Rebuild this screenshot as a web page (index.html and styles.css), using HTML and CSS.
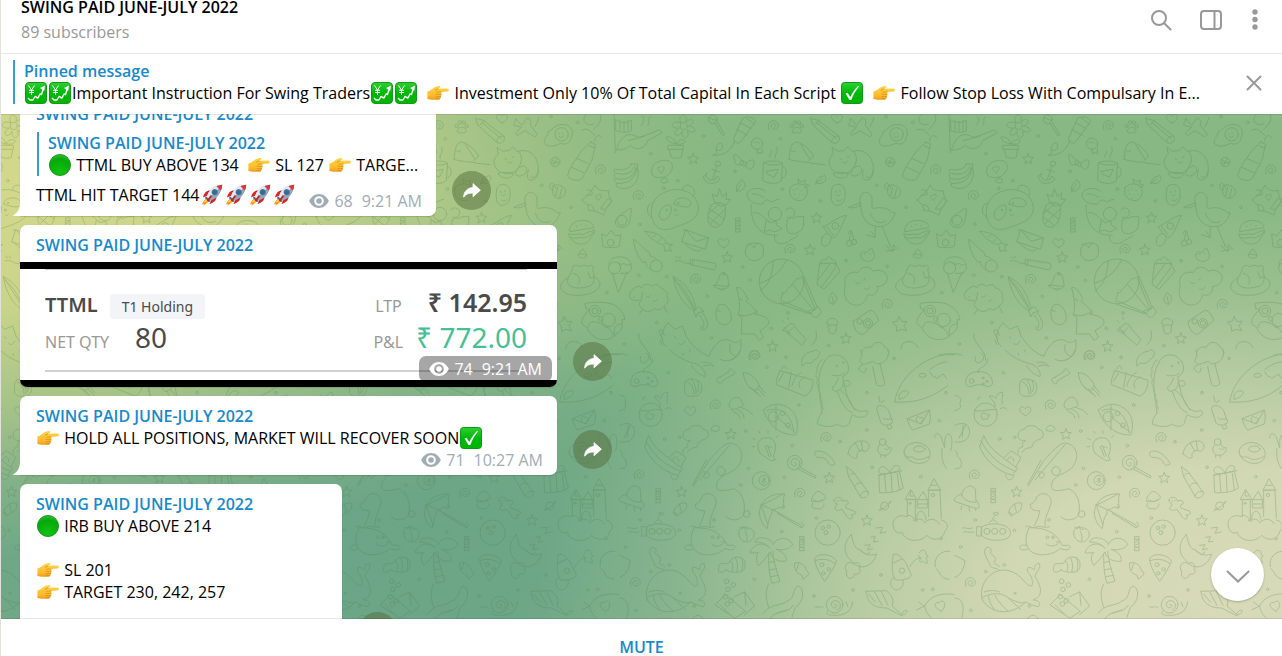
FILE: index.html
```html
<!DOCTYPE html>
<html lang="en">
<head>
    <meta charset="UTF-8">
    <meta name="viewport" content="width=device-width, initial-scale=1.0">
    <title>SWING PAID JUNE-JULY 2022</title>
    <link rel="stylesheet" href="styles.css">
</head>
<body>
    <!-- Shared icons and emoji -->
    <svg class="sprite" aria-hidden="true">
        <defs>
            <linearGradient id="green-fill" x1="0" y1="0" x2="0" y2="1">
                <stop offset="0" stop-color="#2fd02f"/>
                <stop offset=".5" stop-color="#00b80a"/>
                <stop offset="1" stop-color="#00b400"/>
            </linearGradient>
            <radialGradient id="ball-fill" cx=".5" cy=".85" r=".9">
                <stop offset="0" stop-color="#10c410"/>
                <stop offset=".7" stop-color="#06a80a"/>
                <stop offset="1" stop-color="#3cc43c"/>
            </radialGradient>
            <linearGradient id="hand-fill" x1="0" y1="0" x2="0" y2="1">
                <stop offset="0" stop-color="#ffd54a"/>
                <stop offset=".7" stop-color="#fdbb2c"/>
                <stop offset="1" stop-color="#ee9a1c"/>
            </linearGradient>
        </defs>
        <symbol id="e-chart" viewBox="0 0 22 22">
            <rect x=".5" y=".5" width="21" height="21" rx="3.5" fill="url(#green-fill)" stroke="#129a1a"/>
            <path d="M3.500 3.500l3 4.500 3-4.500M6.500 8v5M4 8.300h5M4 10.500h5" fill="none" stroke="#fff" stroke-width="1"/>
            <path d="M3 16l2 2h3l2-3.500 3 1.500 2-4 1.500.5L18.500 6" fill="none" stroke="#fff" stroke-width="1.400" stroke-linejoin="round"/>
            <path d="M15 6l5-2.500-.8 5.500z" fill="#fff"/>
        </symbol>
        <symbol id="e-check" viewBox="0 0 22 22">
            <rect x=".5" y=".5" width="21" height="21" rx="3" fill="url(#green-fill)" stroke="#0a9a18"/>
            <path d="M4.500 11.500l2-.8 2.800 4.300C11.500 10.500 14 7 17 4l1 .4C14.500 8.500 12 13 10.300 18H8.500z" fill="#fff"/>
        </symbol>
        <symbol id="e-ball" viewBox="0 0 22 22">
            <circle cx="11" cy="11" r="10.600" fill="url(#ball-fill)" stroke="#0f8f14" stroke-width=".8"/>
        </symbol>
        <symbol id="e-hand" viewBox="0 0 22 22">
            <path d="M.4 9.500C3 8.800 4.800 7.600 6.500 6c1.700-1.300 4.200-2.200 6-2.100 1.200.2 1.200 1.500.1 2l-1.800.9 9.300-.2c2.200 0 2.300 2.700.3 2.900l-6.500.5c.9.600.9 1.600.2 2.200.6.700.5 1.700-.3 2.200.4.800.1 1.700-.8 2-.2 1-1 1.400-2.300 1.400H6c-2.300 0-3.600-.7-5.600-.9z" fill="url(#hand-fill)"/>
            <path d="M10.800 6.800L8 8.300M9.500 10.200l4.500-.2M9 12.400h5M9 14.600h4.600M9 16.600h3.800" fill="none" stroke="#d98a1c" stroke-width=".7" stroke-linecap="round"/>
        </symbol>
        <symbol id="e-rocket" viewBox="0 0 22 22">
            <path d="M5 14l-4.500 6.500L3 20l-.5 1.800L8.500 17z" fill="#ff9a1f"/>
            <path d="M5.500 14.500L3 18.500l5-2z" fill="#ffe04a"/>
            <path d="M9 6.500C5.500 6.500 3 9 2 13.500l4.500-2zM15.500 12.500c0 4-2.500 6-7 7.500l2-4.700z" fill="#d9222a"/>
            <path d="M5.800 13C7 6.500 12.500 1.500 21.300.7 20.500 9.500 15.500 15 9 16.500z" fill="#93a9ba"/>
            <path d="M5.800 13C7 6.500 12.500 1.500 21.300.7L7.500 14.800z" fill="#dfe8ef"/>
            <path d="M15.500 2.200c1.700-.8 3.600-1.300 5.800-1.500-.2 2.200-.7 4.200-1.500 5.900z" fill="#e0323a"/>
            <circle cx="13.700" cy="8.200" r="2.700" fill="#2b6ca8" stroke="#5d7285" stroke-width=".9"/>
            <path d="M4.800 12.300l4.800 4.800-1.600.8-4-4z" fill="#5d5a68"/>
            <path d="M10.500 11.500L6.500 17" stroke="#c01f28" stroke-width="1.800"/>
        </symbol>
        <symbol id="i-eye" viewBox="0 0 20 14">
            <path fill="currentColor" fill-rule="evenodd" d="M10 0c4.500 0 8 2.800 9.800 7-1.800 4.200-5.300 7-9.800 7S2 11.200.2 7C2 2.800 5.500 0 10 0zm0 2.200a4.800 4.800 0 1 0 0 9.600 4.800 4.800 0 0 0 0-9.600zm0 2a2.800 2.800 0 1 1 0 5.600 2.800 2.800 0 0 1 0-5.600z"/>
        </symbol>
        <symbol id="i-share" viewBox="0 0 18 15">
            <path fill="currentColor" stroke="currentColor" stroke-linejoin="round" stroke-width=".8" d="M10 .6l7.400 6.600L10 13.800V10C6 9.900 3 11 .6 14.200.8 8.600 4.200 5 10 4.400z"/>
        </symbol>
        <symbol id="i-tail" viewBox="0 0 8 14">
            <path fill="#fff" d="M8 0v14H.8C.2 14 0 13.500.4 13.200 5.500 10 7 6 7 0z"/>
        </symbol>

        <!-- Wallpaper parts -->
        <g id="swirl"><path d="M-13 12C-22-8-4-20 8-13 21-4 14 13 0 10c-11-4-8-16 1-16 7 1 8 9 1 10"/></g>
        <g id="star"><path d="M0-15l4 11 12 1-9 8 3 11-10-6-10 7 2-12-9-8 12-1z"/></g>
        <g id="heart"><path d="M2 15C-10 9-18 1-15-7-10-16-2-11 1-5 5-13 13-14 17-6 18 4 10 11 2 15z"/></g>
        <g id="wrapped"><path d="M-7-20H7l-2 8H-5zM-7 22H7L5 12H-5zM-6-12H6V12H-6zM-6-3L6-9M-6 6L6 0"/></g>
        <g id="dot"><circle r="4"/></g>

        <g id="doodles">
            <g transform="translate(0 -4) scale(.3333)">
                <use href="#swirl" x="122" y="180"/><use href="#swirl" x="235" y="257"/><use href="#swirl" x="407" y="508"/>
                <use href="#swirl" x="640" y="47"/><use href="#swirl" x="690" y="418"/><use href="#swirl" x="982" y="583"/>
                <use href="#swirl" x="582" y="737"/>
                <use href="#star" x="400" y="145"/><use href="#star" x="770" y="322"/><use href="#star" x="750" y="418"/>
                <use href="#star" x="502" y="441"/><use href="#star" x="638" y="708"/><use href="#star" x="858" y="684"/>
                <use href="#heart" x="490" y="398"/><use href="#heart" x="830" y="24"/><use href="#wrapped" x="534" y="344"/>
                <use href="#dot" x="53" y="37"/><use href="#dot" x="272" y="131"/><use href="#dot" x="353" y="212"/>
                <use href="#dot" x="430" y="78"/><use href="#dot" x="525" y="184"/><use href="#dot" x="661" y="86"/>
                <use href="#dot" x="781" y="273"/><use href="#dot" x="667" y="237"/><use href="#dot" x="33" y="292"/>
                <use href="#dot" x="239" y="343"/><use href="#dot" x="236" y="496"/><use href="#dot" x="320" y="500"/>
                <use href="#dot" x="140" y="548"/><use href="#dot" x="290" y="638"/><use href="#dot" x="454" y="684"/>
                <use href="#dot" x="548" y="471"/><use href="#dot" x="571" y="511"/><use href="#dot" x="442" y="559"/>
                <use href="#dot" x="193" y="702"/><use href="#dot" x="806" y="707"/><use href="#dot" x="634" y="655"/>
                <use href="#dot" x="858" y="452"/><use href="#dot" x="950" y="226"/><use href="#dot" x="981" y="469"/>
                <use href="#dot" x="978" y="20"/><use href="#dot" x="684" y="609"/>
                <path d="M1018 620l8 15 15-1-9 14 8 14-17-4-13 6-1-17-12-10 15-4z"/>
                <!-- bottle -->
                <path d="M92 96l15 7-5 20c-2 30-20 50-35 82-10 12-45 4-44-10 8-30 25-45 42-72 12-14 18-16 27-27zM50 145l35 16M36 172l35 16M88 108l17 6"/>
                <path d="M78 14c-18 20 4 36 22 28M120 14c10 20-10 34-18 44M66 60c20-10 28 10 38 16M125 84c-6-16-24-4-20 10"/>
                <!-- guitar player -->
                <path d="M166 128l-4-114M168 30c12 10 34 10 46 0v32c-12 6-34 6-46 0zM180 32v28M192 34v28M204 32v28M170 120c4-22 20-50 45-46 25 8 15 10 42 2l40-16 10 8-44 24c-10 30-40 28-52 14-12 12-28 14-41 14zM205 92l50-14"/>
                <path d="M246 18c10 8 4 20-2 28M272 20c-10 6-2 18-8 26"/>
                <!-- flower pot -->
                <circle cx="371" cy="48" r="11"/>
                <path d="M362 38c-12-30 24-30 16-2 18-18 34 0 8 12 30 4 22 30-4 12 10 28-18 32-16 4-12 24-36 8-8-10-30 4-28-26 4-16zM348 102c-4-20-24-24-30-20 2 14 16 16 30 20 8-14 22-16 28-10-4 14-18 10-28 10zM324 106h46v12h-46zM328 118l6 24c10 4 22 4 30 0l4-24"/>
                <!-- lollipop and firecracker -->
                <circle cx="458" cy="28" r="13"/>
                <path d="M446 22l24 10M465 40l23 37 6-3-22-37M549 24c10-8 36-2 38 10l-44 60c-6 10-24 4-22-8zM540 38l34 18M530 58l32 18M558 24l26 18M524 92c-10 30-28 44-66 44 4-2 10-4 12-8-6-28 18-40 18-18-2 12-14 14-16 10"/>
                <circle cx="591" cy="101" r="17"/>
                <path d="M582 98l5-2M592 97l5 2M592 117v14l8-4 7 4v-15"/>
                <!-- paw, pencil, plane, egg -->
                <path d="M697 65c-2-12 22-22 26-2 0 8-8 6-13 4-6 4-12 2-13-2z"/>
                <circle cx="695" cy="48" r="5"/><circle cx="705" cy="37" r="5"/><circle cx="717" cy="38" r="5"/><circle cx="725" cy="49" r="5"/>
                <path d="M753 25l22 6 62 48c6 16-10 26-22 18l-56-52zM766 44l13-14M771 38l58 48M815 97c0-12 10-22 22-18"/>
                <path d="M872 26l18 20 16-22c10 0 14 10 10 22l20 26c0 8-8 10-14 4l-22-14-22 14c-8 0-6-8-2-12l14-12-24-6c0-6 4-8 6-20zM942 22c-2 12-8 18-12 28"/>
                <path d="M970 66c16-10 24-26 50-22 20 2 26 20 20 36-6 24-18 24-34 20-18 10-48 14-48-6 0-10 8-12 12-28z"/>
                <circle cx="1010" cy="73" r="20"/>
                <path d="M1002 70v2M1012 68v2M1002 79c6 6 12 4 14-2"/>
                <!-- bananas, anchor, bow, mug -->
                <path d="M212 162h22l-2 10c14 44-26 80-64 56l2-8c-8-8-8-12-4-16-6-8-4-10 0-14-6-8-4-12 2-12 22 4 40 0 46-16M170 190c30 8 48-4 54-20M168 206c36 8 56-10 60-32M170 220c40 4 60-22 60-46"/>
                <path d="M278 196c-16-28 20-50 46-44 22 8 14 38-8 48-16 4-30 4-38-4zM312 205c14-4 16 14 0 14-14-2-12-12 0-14zM305 188c-14-6-18-20-4-16 8-10 18 4 4 16z"/><use href="#dot" x="311" y="235"/>
                <circle cx="474" cy="161" r="8"/>
                <path d="M470 170l-12 36M456 178l22 8M440 190l-10 10c4 14 10 20 24 20 14 0 22-6 26-14l-10-8-4 10c-16 6-24 0-28-8z"/>
                <path d="M545 150c-10-10-20-20-24-16 0 10 4 18 6 28 8 6 18 2 24-2zM560 160c8-12 20-12 24-6-6 10-2 20-10 24-8 0-12-6-18-10zM545 150l15 10-6 10-14-8z"/>
                <path d="M611 158c14-8 48-6 57 2l-4 52c-12 12-42 10-55 0zM611 158c10 8 44 10 57 2M668 170c16 0 14 34-3 34M619 184l36-6-12 24-12-6-6-2zM630 142c-4-10 8-10 4-20M646 146c-6-12 12-18 4-34"/>
                <!-- fin, cat, bee, ghost -->
                <path d="M687 148c4-30 4-50 24-52 20 6 36 20 50 42l-14 14M722 104l28 44M687 148c30 10 56 6 70 12l38 4M695 122c4 4 8 4 12 0"/>
                <path d="M816 178c-16-20-8-34 4-46l-4-20 18 12c8-2 12-2 18-2l12-12 12 14c12 0 20 28 6 46-16 28-50 26-66 8zM880 124c36-12 62 20 60 56 0 18-8 32-24 30-12-4-10-14-6-30M870 190c6 12 20 10 30 0 8-6 6-18-2-22-14 0-22 10-26 20M820 190c6-4 36-4 44 0 4 18-40 20-44 0zM840 146l5 3M862 142l5-2M848 156l8 4 6-6M940 180c-2 20-14 28-22 20"/>
                <circle cx="991" cy="156" r="14"/><path d="M982 150l18 12M996 146l-10 20M979 160l22-4"/>
                <path d="M985 228c6-8 30-2 36 12 4 20-16 28-26 24-10-6-16-18-10-36zM992 234c-8-24-22-14-16 0 2 6 8 8 10 4M998 232l-6 26M1010 236l-6 26"/>
                <path d="M815 240c0-24 38-22 40 2 4 30-8 46-26 44-18-4-16-28-14-46zM827 244v4M840 242v4M830 254c4 6 8 4 10 0M830 270c6 4 12 6 16-2"/>
                <path d="M768 218c6-20 16-16 26-22 6 8 4 20-10 24zM766 222c10-8 14-12 20-16M530 243c-4-20 6-20 14-34 14 8 16 22 0 32zM530 245c6-14 10-16 14-24"/>
                <!-- pillow, avocado, burger, crown -->
                <path d="M105 226c8 14 18 18 40 16 0 14 4 24 12 30-8 10-20 20-26 44-8-4-24-16-46-14 4-16-10-24-20-32 14-10 24-16 40-44zM116 270c-14-8-10-16-2-14 6-8 18 0 2 14zM122 295l22-30c8 2 12 8 4 20-6 10-16 18-26 10zM80 240c10-4 20 6 16 14l-18 2M84 284c10-2 18 6 18 20"/>
                <path d="M166 336c2-20 24-24 44-42 10 0 0 20 0 38-6 20-22 24-36 18-6-4-8-8-8-14z"/><circle cx="186" cy="331" r="15"/>
                <path d="M29 364c-4-24 26-36 46-32 18 2 28 12 26 20zM27 372c12 6 30-4 42 2 14-8 24-10 34-14v10c-8 6-10 14-18 24-16 14-40 8-48-4-8-8-10-12-10-18zM28 380c10 8 24 4 34 2 14 6 26-4 40-16M50 348v2M64 342v2M78 346v2"/>
                <path d="M126 372l14 6 14-18 12 18 16-4-4 34c-10 6-38 6-48 2z"/><circle cx="152" cy="398" r="10"/>
                <path d="M56 432l12-16 12 16v8c-6 6-18 6-24 0zM56 434c10-6 18 4 24 0"/>
                <!-- panda -->
                <path d="M275 322c-6-40 10-70 60-82 40-6 82 14 80 60-4 30-36 40-70 52-36 14-58 8-70-30zM276 280c-16-2-20 36-2 40M368 240c-2-24 36-16 36 6 0 8-2 12-6 16M298 320c-6-20 20-40 34-34 8 8-4 50-26 44zM342 282c-4-20 44-28 52-2-2 16-28 12-52 2zM345 314c2 4 8 4 10 0"/><circle cx="320" cy="300" r="2"/><circle cx="354" cy="279" r="2"/><circle cx="346" cy="300" r="3"/>
                <!-- pineapple -->
                <path d="M454 286c10-14 36-8 42 0 2 30-4 64-30 66-30-4-26-40-12-66zM450 298l44 30M444 320l34 26M496 296l-44 44M478 282l-34 30M464 276l-8-24 16 8 6-24 10 24 12-12-2 20 14 0-12 16-18 4z"/>
                <!-- monkey cat -->
                <path d="M616 244c-14-16-60-10-54 14 4 20 30 26 46 24 8-20 24-10 26-6 10-2 14-8 22-8M612 262c-10-2-12-12-36-10M574 284c-4 30 8 80 54 90l24 2M580 308c20-4 36 20 50 30M678 300c6-12 26-6 26 8-2 14-12 16-22 14M682 330c10-4 10-10 16-4 12-8 20-6 34-6l-2 30c-6 20-40 30-48 12-4-10-2-20 0-32zM644 376c-6 30 30 30 44 16 14-10 22-8 26-16M620 330l12 8 16-4 2 12 16 10-22 10-16-6-14 4z"/><circle cx="645" cy="312" r="20"/>
                <!-- strawberry -->
                <path d="M690 234c10-18 46-16 52 4 2 18-8 34-24 34-20-2-34-16-28-38zM716 220l-2-14 10 10 12-6-2 12 14 4-14 8M700 240v1M712 236v1M724 242v1M704 252v1M718 254v1M730 254v1M712 264v1"/>
                <!-- pizza, cherries, bird -->
                <path d="M790 350c20-6 40-30 70-34-12 20-18 50-38 68-10-4-22-16-32-34zM786 384c-8 30 14 30 24 14 4-12 6-20-4-26-8-2-16 2-20 12zM800 350l20 26"/><circle cx="826" cy="348" r="10"/>
                <circle cx="868" cy="400" r="9"/><circle cx="882" cy="396" r="8"/><path d="M868 390l6-28 8 28M864 372c2-10 8-12 10-8"/>
                <path d="M900 278c-6-36 30-40 36-14 2 12-4 26 4 32 20-6 40-4 58 12l8 0c-10 26-24 44-54 42-28-4-40-20-46-40zM902 278l-36 14c14 4 30 0 38-10M932 310c4 20 24 36 44 24M946 352v30M968 352l24 60M920 374l24 8M934 364l10 16M978 406l20 20 2-22 14 14M978 424l28-6"/>
                <!-- meteor, carrot, letter, dynamite -->
                <path d="M220 388c8-2 30 30 48 40l2 10c12 2 14 6 18 8M220 388c4 24 10 50 30 70l6-4c4 20 12 22 18 26"/><circle cx="289" cy="468" r="18"/>
                <path d="M254 364c34 2 56 14 64 34-10 16-40-6-64-34zM318 400l20 4-10 6 6 14-14-4-4 6-4-18M280 380l8-6M296 394l8-8"/>
                <path d="M378 360l68 24-10 34-70-22zM378 360l30 34 38-10M372 398c20 20 36 28 48 24l8-8M370 360h8"/>
                <path d="M392 448l74 12c4 8 0 18-4 20l-70-16zM400 450l-4 16M390 460c-16 4-22-8-34-8M348 440l6 4M360 438v6M346 452h6"/>
                <!-- ice cream, hamster, sheep -->
                <circle cx="164" cy="474" r="18"/><path d="M148 466c-10-30 62-38 66 0 2 14-4 22-14 22l-25 60-18-60M182 490h22M178 458c6 16 12-6 18 6 6 6 8-6 16 2"/>
                <path d="M40 470c8-8 12-4 18 0 8-4 20-6 26 0 12-8 20 0 14 10 8 20 6 40-8 48-40 14-80 4-64-28 8-8 8-20 14-30zM22 504c-30 20-24 36 0 48 46 12 96-4 98-30-2-14-10-18-20-22M40 490c16 4 24 16 16 32M84 486l6 18 8-2"/>
                <path d="M238 570c-16 4-30 0-30-16 4-12 12-18 20-22l8-4 10 6c4-14 22-14 28-4 10-10 26-6 28 4 16 4 22 16 20 26 6 16-4 24-10 28l10 20M310 590c-14 16-24 6-28 6-12 14-28 8-34 2l-10 14M248 596c-16-6-10-20-4-26l4-22M222 560v2M260 560c6 4 10 0 12-4M280 572c6 4 10 0 12-4"/>
                <!-- umbrella, bell, egg, tree -->
                <path d="M340 500c30 16 50 34 68 92l-6 10c-24-10-54-48-62-102zM340 500l64 100M344 510c30 20 46 60 60 88M402 602l14-12 16 14-18 4-6 12zM418 614l14 24c-2 20-4 20-10 10M428 608l14 26c4 20-8 34-20 22"/>
                <path d="M462 526c18-4 10-36 28-38 18 4 12 24 18 38-4 16-36 14-46 2zM460 528c20-8 34 8 46-2M478 536c2 6 12 6 14 0"/><circle cx="492" cy="492" r="4"/><path d="M478 584c16-8 34 14 36 36 0 20-14 28-30 22-20-8-22-44-6-58zM470 600l10 4"/>
                <path d="M530 534c12-10 26 18 34 34l-6 6c14 10 30 26 34 34l-8 4c20 4 50 12 42 30-10 12-20 16-26 20l10 20-12 10-14-20-40 0 2-50-12-8c10-20 2-60-4-80zM538 614c20 8 38 0 54-12M540 566l8 6"/>
                <!-- balloon, cake, cloud, camera -->
                <circle cx="665" cy="514" r="67"/>
                <path d="M640 452c-2 44-14 74-40 90M680 450c-20 40-50 60-82 70M732 500l40 92-22 20-88-30M664 576c-4-14 4-14 4-28 14 2 8-12 26-20 8-20 12-12 16-22 8 4 10-6 22-6M700 526l62 76M728 508l38 90M670 574l84 36M756 600l18-10 10 14c-4 14-12 18-22 18l-16-18z"/>
                <path d="M780 460l48 0 12 24-48 54-20-14zM784 464c-8-10 8-20 14-14 4-14 18-10 18 0 12-2 16 10 8 18M776 508l34-46M784 532l44-60"/>
                <path d="M860 570c-10-16-8-30-4-44-10-24 14-46 38-38 8-20 36-22 46-4 20-10 44 4 42 22-4 20-20 22-30 24 4 12-6 24-16 26-10-2-14-2-14 0-4 30-42 42-62 14zM886 516c4 6 10 6 14 2M912 510l4-6M914 536c6 6 14 2 16-6"/>
                <path d="M808 576c-4-16 4-18 8-28 16 8 20 24 4 34zM820 584c0-10-2-20-4-24M880 634l48-32c10-4 24 12 28 30l-46 40c-16 6-32-22-30-38z"/><circle cx="924" cy="640" r="14"/><circle cx="924" cy="640" r="8"/><circle cx="899" cy="634" r="8"/>
                <path d="M903 434c4-16 12-4 20-8 6-4 6-14 12-12l8 20c4 14-14 22-22 20-12-2-22-10-18-20zM914 432v2M930 430v2"/>
                <path d="M800 640c0-20 32-20 34 0 0 8-34 8-34 0zM804 646l4 22c6 6 16 4 20-2l2-20M668 660l24-20 10 4 10 16 26 28-12 18-46-40zM672 652l18 18M700 652l-20 20M768 662c4 20 0 34-12 42M668 632l4 4M684 622v6"/>
                <path d="M556 424c0-26 30-30 50-20 10 20 6 48-26 48-16-2-24-14-24-28zM560 404c8-6 16 2 22 10 2-10 6-12 12-14"/>
                <!-- pug in goggles, fox, clouds -->
                <circle cx="105" cy="603" r="17"/><circle cx="146" cy="630" r="20"/><circle cx="105" cy="603" r="9"/>
                <path d="M76 580c30-6 80-4 90 8 18 10 30 30 28 42l-8-2c4 20 0 36-18 44-16 24-70 26-88-20-20-10-18-20-4-40l12-14-10-2zM84 652c4-20 14-18 32-14 20 8 40 20 44 40M118 620c8-2 14 6 8 14-10 0-12-8-8-14M184 642c-20 0-26 20-20 36M134 650c4 6 14 4 16-2"/>
                <path d="M320 710c-20-14-20-44 4-72l20 20 24-10 10 30c20 30 40 50 66 60M308 690l-12-28 8-4 10 18M300 690l6 14M344 680l4 6M356 700c8 8 14 2 18-6M446 740c20-50 50-60 72-44 12 4 20 0 24-8 4 30 0 50-30 62M510 704c-4 20 4 32 20 36M236 672c-4 30 40 50 36 78"/>
                <path d="M18 716c-2-26 40-30 50-4M904 730c4-20 20-20 30-18 8-20 34-20 40 0 12 2 16 14 10 24M130 736c20-6 60-8 72 0"/>
            </g>
            <g transform="translate(60 236) scale(.3333)">
                <use href="#swirl" x="405" y="17"/><use href="#swirl" x="286" y="165"/><use href="#swirl" x="58" y="375"/>
                <use href="#swirl" x="618" y="263"/><use href="#swirl" x="539" y="430"/><use href="#swirl" x="46" y="698"/>
                <use href="#star" x="333" y="251"/><use href="#star" x="185" y="424"/><use href="#star" x="628" y="382"/><use href="#star" x="741" y="510"/>
                <use href="#heart" x="210" y="182"/><use href="#wrapped" x="115" y="436"/><use href="#wrapped" x="546" y="580"/>
                <use href="#dot" x="145" y="68"/><use href="#dot" x="134" y="267"/><use href="#dot" x="179" y="262"/>
                <use href="#dot" x="377" y="243"/><use href="#dot" x="440" y="52"/><use href="#dot" x="498" y="22"/>
                <use href="#dot" x="536" y="165"/><use href="#dot" x="741" y="128"/><use href="#dot" x="822" y="25"/>
                <use href="#dot" x="740" y="240"/><use href="#dot" x="660" y="275"/><use href="#dot" x="517" y="287"/>
                <use href="#dot" x="385" y="355"/><use href="#dot" x="493" y="382"/><use href="#dot" x="362" y="405"/>
                <use href="#dot" x="756" y="352"/><use href="#dot" x="902" y="380"/><use href="#dot" x="958" y="212"/>
                <use href="#dot" x="978" y="128"/><use href="#dot" x="61" y="510"/><use href="#dot" x="282" y="510"/>
                <use href="#dot" x="178" y="541"/><use href="#dot" x="485" y="545"/><use href="#dot" x="589" y="504"/>
                <use href="#dot" x="963" y="566"/><use href="#dot" x="783" y="675"/><use href="#dot" x="403" y="688"/>
                <use href="#dot" x="148" y="645"/><use href="#dot" x="17" y="591"/><use href="#dot" x="92" y="665"/>
                <use href="#dot" x="582" y="738"/><use href="#dot" x="699" y="720"/><use href="#dot" x="908" y="720"/>
                <use href="#dot" x="938" y="718"/><use href="#dot" x="47" y="781"/><use href="#dot" x="223" y="768"/>
                <!-- gamepad, shell, bone, squid -->
                <path d="M40 76c10-16 52-14 64 0 14 20 10 34-6 34-14-8-36-8-50 0-18 2-22-18-8-34zM70 68c-4-20 24-10 28-40M62 20c-6 16 6 24 18 14 8-8 10-20-2-24"/><circle cx="50" cy="93" r="7"/><circle cx="84" cy="84" r="3"/><circle cx="96" cy="94" r="3"/><circle cx="84" cy="102" r="3"/>
                <path d="M194 110c-6-20 16-28 34-20 16 2 20 18 16 30 0 14-14 20-26 18-14 4-20-4-24-10zM202 96c10 4 18 10 20 36M216 90c8 10 12 20 12 40M232 92c4 14 6 20 0 34"/>
                <path d="M300 82l28-18c-4-10 8-10 10-2 10 2 6 14-4 14l-28 18c2 10-8 10-10 2-10-2-8-14 4-14zM370 68c20-4 50 28 48 44-10 14-24 8-30 0-12-14-18-30-18-44zM390 112l22 20M400 116l22 24M410 112l24 26M416 106l18 22"/>
                <!-- drawing, dinosaur, drumstick, surfboard -->
                <path d="M480 62l98 28c6 10-8 46-24 48l-84-34c-4-10 4-30 10-42zM514 66l-8 46M490 70l-14 24M516 108c4-20 14-34 28-40M540 114c-8-14 0-26 16-34M486 56c0-12 14-10 14 0"/>
                <path d="M606 188c-6-50-20-110 6-150 10-30 50-30 66-6 14 20 8 42-10 48 10 50 20 100 54 104 14 0 22-8 20 8-8 14-30 12-44 2-8 10-6 14-10 26-10 14-26 10-36 2-16 10-36 10-60 0 2-14 4-20 14-34zM606 30c-12 6-8 14-12 18-8 8 0 14-4 22-6 10 4 14 2 22-6 8 4 14 4 22-4 10 6 14 6 22-4 10 8 16 4 24-4 8 6 12 4 18M636 76c18 4 30 0 38-8M656 84l-10 20c-10 6-12 16 0 20 10-2 20-8 24-18-4-8 2-16 14-14 14 6 4 24-10 14M652 124c10 30 24 56 44 64M660 120c16 10 30 30 44 60"/><circle cx="650" cy="48" r="2"/><circle cx="670" cy="38" r="2"/>
                <path d="M722 0c4 10 6 14 0 26-8 14 10 20 20 14l18-6c8 16 40 4 44-16 4-10 0-14-2-18M728 46c-14 2-14 14-4 18 6 8 16 2 14-10M758 50l12 54c6 8 26 4 24-6l-14-56M545 36c0-16 14-30 34-32 10-8 14-4 20 4-4 10-4 18-14 20-10 14-20 14-28 10l-10 10z"/>
                <path d="M824 156c10-70 80-130 150-142l31 0M824 156c60 4 110-10 160-50M838 134c6-14 20-14 28-8-2 10-16 20-28 22zM930 58c20-14 30-20 50-22M930 66c8 20 16 10 20 20l20-14 10 14"/><ellipse cx="908" cy="76" rx="11" ry="6"/>
                <!-- fishbowl, jellyfish, watermelon, popsicle, letter -->
                <circle cx="92" cy="194" r="35"/><path d="M58 180c20 10 40-6 68 0M78 196l8-10 8 8 10 0-6 12-14 2zM120 172c4-20-14-20-16-34 10-2 14 4 18 8 2-10 8-18 20-20 4 14-4 18 0 36M136 176c8-6 16-2 20 2M70 150c-4-10 4-12 8-6"/>
                <path d="M328 170c-8-20 30-44 38-14 8 10 0 18-10 16-12 8-18 8-28-2zM334 178c10 16 20 4 26 26M350 176c10 12 20 6 22 28M362 170c10 12 16 0 36 24"/>
                <path d="M430 180c30-26 60-20 84 0 20 18 22 50 14 74-36 4-80-20-98-74zM440 182c40-16 76 10 82 66M468 166v74M468 200l56 46"/><circle cx="460" cy="200" r="15"/><circle cx="488" cy="190" r="7"/><circle cx="504" cy="226" r="7"/>
                <path d="M770 178c-4-16 24-16 36 4l12 34c-4 10-24 14-34 4zM790 204c4 8 14 0 26 4M800 224l6 14 10-4-6-14M776 138l4 18M794 150l-10 8M862 206l66-26c4 14 4 30 0 42l-50 18c-8-8-14-22-16-34zM862 206l42 16 24-42M892 216c-10-14 4-22 8-12 10-6 14 8 0 16"/>
                <!-- ship, fishing rod, bulb, worm -->
                <path d="M74 290l12-34c14 40 50 60 102 100l-16 20c-50-14-84-50-98-86zM78 272c20 44 60 76 104 92M148 322l20-20 30 20-16 30M158 330c4-16 20-10 18 4M190 310c-4-14 4-16 14-20-4-10 0-14 8-18-30 4-30-34-4-34 4-16 40-14 42 0 16 0 22 24 4 30-14 2-20 12-24 24-10 2-20 2-28 14M274 240c-4-14 22-20 26-4-2 10-20 10-26 4M152 374c0 20 24 20 24 2"/>
                <path d="M220 408l46-76c20-20 50-60 70-52 40 10 36 60 6 80-20 14-34 14-48 32-18 40 20 30 48 24 30 14 34 50 30 76-10 20-40 24-54 8M218 404l40-74M250 366c16-4 24 10 12 18-10 2-14-8-8-14M240 390l90-106"/><circle cx="303" cy="363" r="13"/><circle cx="380" cy="492" r="10"/>
                <path d="M420 310c-20-40 10-50 30-46 24 10 16 40 10 54l6 12-14 2c-10-6-20-14-32-22zM436 290l12 30M444 290l10 28M436 290c4-6 10-4 10 4 6-6 10-4 10 0M406 268l-8-2M420 250l-4-6M444 250v-8M470 262l6-6M404 290h-8"/>
                <circle cx="524" cy="338" r="22"/><path d="M540 352l48 26-2 6-50-26M524 338c8 0 8 10-2 10-12-2-12-22 4-22 18 2 16 26 4 30M586 306c10-8 40-2 60 36-10 6-16 4-20-2-4-12-14-18-34-18-8-4-10-8-6-16M684 312c4-30 30-44 52-38 20 10 10 30-2 30-14-8-28 4-22 18-12 8-16-4-28-10zM706 280l14 24M724 274l4 28"/>
                <circle cx="788" cy="276" r="10"/><path d="M780 284c-10 4-10 30 10 32 20 2 28-20 22-24-6 2-10 0-14-10M782 316v6M796 316v6M794 296c6 4 12 4 14-2"/>
                <path d="M852 306c0-26 40-36 60-22 20 10 22 30 14 44-10 18-64 20-74-22zM854 316c10 12 20 0 28 8 10 8 30 4 44-4M944 264c-2-16 16-20 22 4l8 26c0-20 0-44 14-42 12 10 8 36 4 50M966 296c-2 20 0 44 14 60"/><ellipse cx="898" cy="297" rx="17" ry="9"/>
                <!-- ufo, eight ball, crayon, gift -->
                <path d="M20 436c4-30 30-34 40-20 4 14 0 24 4 40-14 4-40-6-44-20zM18 432c-24 10-24 20-14 24l60 20c14-2 8-14 0-24M20 468l-2 10M42 472l2 12M62 474v8"/>
                <circle cx="424" cy="392" r="27"/><circle cx="432" cy="391" r="15"/><circle cx="432" cy="387" r="3"/><circle cx="431" cy="394" r="4"/>
                <path d="M680 350l20 16 44 60c6 10-10 22-22 16l-36-62zM686 380c6-10 10-12 20-8M704 410c4-10 14-14 24-10M720 438c4-10 14-18 26-12M778 374l60-10 12 50c-14 12-50 16-70 14zM776 376l70-14M810 370c-10-24-30-26-34-8 4 14 20 10 34 8 4-20 20-30 30-18-2 14-16 14-30 18M794 376l4 50M814 374l2 52M832 370l6 50"/>
                <!-- fish, submarine, nessie, peach, beach umbrella -->
                <path d="M162 486c0-14 14-24 28-28l10 2c2 14-4 26-20 30l-8 8-4-8zM178 462l6 22M160 488l8 10"/>
                <path d="M80 532c14-16 70-14 84 6 8 18-4 32-30 32-30 4-52-8-56-16zM66 530h14v28H66zM104 518c6-12 16-10 22 0M114 508c0-10 4-8 8-12l-8-6 14-4 2 8-8 2M22 534c10-4 14 6 30 0M26 546c10-4 14 4 30 0"/><circle cx="96" cy="544" r="9"/><circle cx="119" cy="544" r="9"/><circle cx="143" cy="544" r="9"/>
                <path d="M238 528c10-20 14-30 16-46-14 2-30-4-28-18 10-6 16-10 20-24 14-18 46-8 42 20-4 20-20 40-18 68M222 534c-14 30-10 50 0 64 20 26 74 18 92-2l20 4c14-2 14-14 4-14l-16 0c-14-30-40-50-80-52zM214 586c-20-4-24 8-16 12 8 4 14 2 22-2M212 530c10-8 20 10 34 0 10-4 20 6 38 0M274 582c10 10 30 8 40-6-4-2-8-2-10 0"/><circle cx="277" cy="562" r="4"/><circle cx="294" cy="562" r="4"/>
                <path d="M356 552c-4-20 20-24 28-18 30 4 20 40-2 42-14 0-24-10-26-24zM360 532l8 4 4-8 4 10 8 0M376 544c6 10 6 20 4 28"/>
                <path d="M418 488c2-40 40-60 76-56-4 10-4 24-2 40-12-2-20 0-24 6-10 0-14 0-12 12-10 14-12 30-14 46-14-10-24-30-24-48zM420 466c14-2 60-30 70-34M424 464l44 20M468 484l72 40c8 4 8 10 0 8M472 490l66 40c14 8 18-8 6-14M424 466l20 60M488 464l6 8-8 4"/>
                <path d="M576 454c-4-16 10-20 10-26 10-8 20 0 22 4 10 4 10 16 2 18-6 6-26 6-34 4zM578 460c-8 14 6 16 14 16 14 4 20-8 20-14M582 450c10 6 20 6 26-2M642 452c0-14 24-14 26 2 10-6 20 0 16 8-8 0-10 6-6 12l26 10c6 8-2 12-10 10l4 10c-6 6-14 2-18-6l-14-20c-10 4-20 6-22-4l8-12c-6-2-8-6-10-10zM652 452v2M660 450v2"/>
                <circle cx="794" cy="468" r="12"/><path d="M784 474c-10 10-8 10 2 4l26-20c4-10-4-2-8 2"/>
                <!-- castle -->
                <path d="M820 530c-8-24 20-40 38-30 6-8 20-4 28 14M844 548c-14 4-20-4-24-18M846 546c10 34 60 30 74 10 20 20 50 14 54-12 14-10 10-30-10-34M880 512c14-8 30-6 34 6 14-14 34-14 44 4M862 500v-52h24v60M856 448l16-30 18 30zM894 448l16-24 12 24zM892 448v26h30v-26M890 514c-2-40 24-40 28-6M926 500v-80h34l4 84M924 420l18-34 20 34zM872 424l-2 14 10 0M934 406h16M894 462h26"/><circle cx="939" cy="435" r="5"/><circle cx="870" cy="460" r="3"/>
                <!-- bowling ball, moon, rocket, pizza -->
                <circle cx="623" cy="548" r="38"/><circle cx="609" cy="534" r="5"/><circle cx="626" cy="530" r="5"/><circle cx="618" cy="548" r="6"/>
                <path d="M694 554c-26 24-24 60 0 78 20 30 62 24 76-20-20 8-40 0-50-14-14 4-20-20-26-44zM680 664c-14-20 10-34 20-22 10-10 24 0 18 14 8 14-4 18-14 16-6 22-30 14-24-8M734 586l16-2-8 16 16-4M752 562l14-2-6 16 14-2M768 534l20-2-8 18 18-4M720 600l20 14 10-8"/>
                <path d="M820 614c10-8 30 10 40 30l14 30c0 14-40 20-50 14-10-20-8-50-4-74zM818 640l30-14M824 682c-14 0-20 30 4 38 20-2 26-20 20-30M870 650c10-20 24-28 34-26M898 608c4-10 18-10 20 0-2 10 8 6 6 12-10 0-2 10-2 20-10 0-8-6-14-6-6 6-10 4-8-4 4-10-6-8-4-14"/><circle cx="846" cy="662" r="8"/>
                <path d="M584 630c-4-20 50-24 66 4-10 20-20 40-36 60-14-20-26-40-30-64zM586 632c20-8 42-4 58 8M524 640c10-10 34 6 34 20 8 4 4 8 10 12l-18 16-4-12c-20-8-24-20-22-36zM536 640l-6 20"/><circle cx="606" cy="644" r="6"/><circle cx="626" cy="658" r="5"/><circle cx="610" cy="670" r="5"/>
                <!-- palm, shell, whale, popcorn -->
                <path d="M450 594c-20-20-50-14-60 14 10 4 20-2 26 0-10 10-8 24 0 38 14-10 24-26 34-40 4 20 24 30 48 28 4-16-10-30-30-36 20 4 40 0 50-14-10-26-50-24-58 0-4-20-50-30-56-8 20 0 34 6 46 18zM446 610c0 30 0 60 10 90l24-6c-10-30-20-60-22-90M446 638l18-4M448 660l22-4M452 680l24-4"/>
                <path d="M318 660c-30 20-24-8-18-18 10-4 24 4 30-8 10-20 40-14 44 0 4 20-2 30-14 32-20 2-32 0-42-6zM330 634c10 0 10 20 6 30M346 624c8 10 8 30 4 42M364 622c6 10 6 30 2 40"/>
                <path d="M82 750c-14-50 30-100 80-88 40 10 50 50 68 46 6-10 0-20-2-30-10-10-14-20-8-26 10 0 14 4 18 8 0-10 4-20 14-20 10 14-10 24-12 40 20 30 26 60-6 70 20 0 24 14 16 20-14-2-30-10-38-14-40 40-100 40-130-6zM80 744c20-14 60-20 80 0 20 10 40 20 52 12M88 726c14-6 34-6 46 0M100 738c4 20 10 30 18 40M120 736c6 16 30 40 40 48M160 744l36 34M134 662c-4-10-30-4-30-20-10-20-24-40-8-50 14 0 14 10 10 16 4 10 20 10 14 26-10 6 10 10 14 16"/><circle cx="180" cy="730" r="3"/>
                <path d="M286 764l30-30 60 50-30 20zM344 740l30-14 30 42-30 26M300 764l30 30M374 726l4 40"/><circle cx="320" cy="694" r="7"/><circle cx="340" cy="705" r="7"/><circle cx="324" cy="718" r="7"/><circle cx="316" cy="740" r="7"/><circle cx="334" cy="752" r="7"/><circle cx="322" cy="762" r="7"/>
                <path d="M430 790c20-30 50-20 70-36 30-10 14-40 36-46 20 10 14 50-10 64l-10 30M450 806c20-30 50-10 70-40M470 790l30-10M446 702c-10 20-10 40 0 70"/>
                <circle cx="644" cy="764" r="25"/><path d="M644 764c8-4 10 8 0 10-14-2-14-22 4-22 16 2 18 24 4 28M624 782c-10 10 0 14 20 14 30 0 50-10 54-40M684 770l-6-14M584 770c10 6 20-6 26 4"/>
                <path d="M738 724l60-2c20 14 24 30 18 46l30 26M738 724c4 40 30 50 62 50l46 24M746 732l20 24M764 726l22 40M784 724l20 42M846 794c4-14 10-14 16-12-4 10-8 14-16 12M890 780l24-12M896 756l18 14c10-30 50-44 88-36M914 770c4 16 10 26 20 34M964 784c-24-10-24-30-6-26 10-14 28 4 6 26M946 650c-6-30 20-50 44-46M948 656c14 8 8 30 40 32M0 744c24 0 30 30 20 60M0 616c10 6 20 10 30 16-2 20-10 44-30 50"/>
                <path d="M0 136c16 0 22 16 14 24 8 14-4 20-14 22M0 226c30-16 50 4 42 30-6 16-20 22-42 20M0 302c10 4 4 14 10 20 14 10 10 30 4 32l-14 2M24 226l-2 34M12 264l20-40M218 806c10-14 24-14 30 0"/>
                <!-- narwhal tail -->
                <path d="M150 0c20 20 50 36 80 42 20 10 30 30 24 38-14-6-28-14-40-34M250 48c40-10 30 10 30 0-4-10-20-14-34-10M300 28c20 10 50 4 60-28M210 0v6M190 10v6"/>
            </g>
        </g>
    </svg>

    <div class="app">
        <header class="topbar">
            <div class="chat-info">
                <h1 class="chat-title">SWING PAID JUNE-JULY 2022</h1>
                <p class="chat-status">89 subscribers</p>
            </div>
            <div class="topbar-actions">
                <button class="icon-button" type="button" aria-label="Search">
                    <svg width="24" height="24" viewBox="0 0 24 24"><circle cx="10" cy="10" r="7" /><path d="M15 15l6.500 6.500"/></svg>
                </button>
                <button class="icon-button" type="button" aria-label="Toggle info panel">
                    <svg width="24" height="24" viewBox="0 0 24 24"><rect x="2" y="3" width="20" height="18" rx="3"/><path d="M15.500 3v18"/></svg>
                </button>
                <button class="icon-button icon-button-narrow" type="button" aria-label="Menu">
                    <svg class="dots" width="12" height="24" viewBox="0 0 12 24"><circle cx="6" cy="4" r="2.700"/><circle cx="6" cy="11.500" r="2.700"/><circle cx="6" cy="19" r="2.700"/></svg>
                </button>
            </div>
        </header>

        <section class="pinned">
            <div class="quote pinned-body">
                <div class="name">Pinned message</div>
                <div class="quote-text"><svg class="emoji"><use href="#e-chart"/></svg><svg class="emoji"><use href="#e-chart"/></svg>Important Instruction For Swing Traders<svg class="emoji"><use href="#e-chart"/></svg><svg class="emoji"><use href="#e-chart"/></svg>&nbsp; <svg class="emoji"><use href="#e-hand"/></svg> Investment Only 10% Of Total Capital In Each Script <svg class="emoji"><use href="#e-check"/></svg>&nbsp; <svg class="emoji"><use href="#e-hand"/></svg> Follow Stop Loss With Compulsary In E...</div>
            </div>
            <button class="icon-button" type="button" aria-label="Close">
                <svg width="24" height="24" viewBox="0 0 24 24"><path d="M5.500 6.500l13 13M18.500 6.500l-13 13"/></svg>
            </button>
        </section>

        <main class="chat">
            <svg class="wallpaper" aria-hidden="true">
                <g transform="translate(559 0)">
                    <use href="#doodles" x="-670"/>
                    <use href="#doodles" x="-335"/>
                    <use href="#doodles"/>
                    <use href="#doodles" x="335"/>
                    <use href="#doodles" x="670"/>
                    <use href="#doodles" x="1005"/>
                </g>
            </svg>

            <div class="messages">
                <div class="row">
                    <article class="bubble bubble-tailed bubble-reply">
                        <div class="name">SWING PAID JUNE-JULY 2022</div>
                        <div class="quote reply">
                            <div class="name">SWING PAID JUNE-JULY 2022</div>
                            <div class="quote-text"><svg class="emoji"><use href="#e-ball"/></svg> TTML BUY ABOVE 134&nbsp; <svg class="emoji"><use href="#e-hand"/></svg> SL 127 <svg class="emoji"><use href="#e-hand"/></svg> TARGE...</div>
                        </div>
                        <div class="last-line">
                            <p class="text">TTML HIT TARGET 144<svg class="emoji"><use href="#e-rocket"/></svg><svg class="emoji"><use href="#e-rocket"/></svg><svg class="emoji"><use href="#e-rocket"/></svg><svg class="emoji"><use href="#e-rocket"/></svg></p>
                            <div class="meta"><svg class="eye"><use href="#i-eye"/></svg><span class="views">68</span><time>9:21 AM</time></div>
                        </div>
                        <svg class="tail"><use href="#i-tail"/></svg>
                    </article>
                    <button class="share" type="button" aria-label="Share"><svg><use href="#i-share"/></svg></button>
                </div>

                <div class="row">
                    <article class="bubble bubble-wide bubble-photo">
                        <div class="name">SWING PAID JUNE-JULY 2022</div>
                        <div class="photo">
                            <div class="holding">
                                <div class="holding-line">
                                    <span class="symbol">TTML</span>
                                    <span class="tag">T1 Holding</span>
                                    <span class="label push">LTP</span>
                                    <span class="price">₹ 142.95</span>
                                </div>
                                <div class="holding-line">
                                    <span class="label">NET QTY</span>
                                    <span class="qty">80</span>
                                    <span class="label push">P&amp;L</span>
                                    <span class="profit">₹ 772.00</span>
                                </div>
                            </div>
                            <div class="meta meta-badge"><svg class="eye"><use href="#i-eye"/></svg><span class="views">74</span><time>9:21 AM</time></div>
                        </div>
                    </article>
                    <button class="share" type="button" aria-label="Share"><svg><use href="#i-share"/></svg></button>
                </div>

                <div class="row">
                    <article class="bubble bubble-tailed bubble-wide">
                        <div class="name">SWING PAID JUNE-JULY 2022</div>
                        <p class="text"><svg class="emoji"><use href="#e-hand"/></svg> HOLD ALL POSITIONS, MARKET WILL RECOVER SOON<svg class="emoji"><use href="#e-check"/></svg></p>
                        <div class="meta"><svg class="eye"><use href="#i-eye"/></svg><span class="views">71</span><time>10:27 AM</time></div>
                        <svg class="tail"><use href="#i-tail"/></svg>
                    </article>
                    <button class="share" type="button" aria-label="Share"><svg><use href="#i-share"/></svg></button>
                </div>

                <div class="row">
                    <article class="bubble bubble-call">
                        <div class="name">SWING PAID JUNE-JULY 2022</div>
                        <p class="text"><svg class="emoji"><use href="#e-ball"/></svg> IRB BUY ABOVE 214<br><br><svg class="emoji"><use href="#e-hand"/></svg> SL 201<br><svg class="emoji"><use href="#e-hand"/></svg> TARGET 230, 242, 257</p>
                    </article>
                    <button class="share" type="button" aria-label="Share"><svg><use href="#i-share"/></svg></button>
                </div>
            </div>

            <button class="scroll-down" type="button" aria-label="Scroll to bottom">
                <svg width="24" height="14" viewBox="0 0 24 14"><path d="M1.500 1.500L12 11.500l10.500-10"/></svg>
            </button>
        </main>

        <footer class="bottombar">
            <button class="mute" type="button">MUTE</button>
        </footer>
    </div>
</body>
</html>
```
FILE: styles.css
```css
:root {
    --accent: #168acd;
    --quote-bar: #3a9ad5;
    --muted: #999999;
    --meta: #a0acb6;
    --border: #e7e7e7;
}

* {
    margin: 0;
    padding: 0;
    box-sizing: border-box;
}

body {
    font-family: "Open Sans", "Noto Sans", sans-serif;
    font-size: 16px;
    line-height: 22px;
    color: #000;
    background: #fff;
}

button {
    border: none;
    background: none;
    font: inherit;
    cursor: pointer;
}

svg {
    display: block;
}

.sprite {
    position: absolute;
    width: 0;
    height: 0;
}

.app {
    display: flex;
    flex-direction: column;
    height: 100vh;
    overflow: hidden;
    border-left: 1px solid #dfe3dc;
}

/* Top bar */
.topbar {
    display: flex;
    justify-content: space-between;
    height: 54px;
    padding: 0 21px 10px 20px;
    border-bottom: 1px solid var(--border);
}

.chat-info {
    display: flex;
    flex-direction: column;
    justify-content: flex-end;
    gap: 3px;
}

.chat-title {
    font-size: 16px;
    font-weight: 600;
}

.chat-status {
    color: var(--muted);
}

.topbar-actions {
    display: flex;
    align-items: flex-start;
    gap: 26px;
    padding-top: 8px;
}

.icon-button {
    flex: none;
    width: 24px;
    height: 24px;
}

.icon-button-narrow {
    width: 12px;
}

.icon-button svg {
    fill: none;
    stroke: var(--muted);
    stroke-width: 2;
    stroke-linecap: round;
}

.icon-button .dots {
    fill: var(--muted);
    stroke: none;
}

/* Pinned message */
.pinned {
    display: flex;
    align-items: center;
    gap: 30px;
    padding: 6px 16px 10px 12px;
}

.pinned-body {
    flex: 1;
    min-width: 0;
}

.name {
    font-weight: 600;
    color: var(--accent);
    white-space: nowrap;
}

.quote {
    padding-left: 9px;
    border-left: 2px solid var(--quote-bar);
}

.quote-text {
    white-space: nowrap;
    overflow: hidden;
    text-overflow: ellipsis;
}

.emoji {
    display: inline-block;
    width: 22px;
    height: 22px;
    margin: 0 1px;
    vertical-align: top;
}

/* Chat */
.chat {
    position: relative;
    flex: 1;
    min-height: 0;
    overflow: hidden;
    background:
        radial-gradient(ellipse 54% 80% at 96% 96%, #d8dab8 0, rgba(215, 218, 183, .93) 32%, rgba(213, 216, 181, .6) 55%, rgba(213, 216, 181, .2) 79%, rgba(213, 216, 181, 0) 100%),
        radial-gradient(ellipse 56% 74% at 0 14%, #d3d88b 0, rgba(211, 216, 139, .88) 32%, rgba(211, 216, 139, .5) 60%, rgba(211, 216, 139, .17) 81%, rgba(211, 216, 139, 0) 100%),
        radial-gradient(ellipse 48% 68% at 22% 88%, #6ba587 0, rgba(107, 165, 135, .95) 38%, rgba(107, 165, 135, .55) 68%, rgba(107, 165, 135, .18) 86%, rgba(107, 165, 135, 0) 100%),
        #88b884;
}

/* Hairlines over the chat edges */
.chat::after {
    content: "";
    position: absolute;
    inset: 0;
    border: solid rgba(0, 0, 0, .1);
    border-width: 1px 0;
    pointer-events: none;
}

.wallpaper {
    position: absolute;
    inset: 0;
    width: 100%;
    height: 100%;
    fill: none;
    stroke: #4d7f4a;
    stroke-width: 3;
    stroke-linecap: round;
    stroke-linejoin: round;
    opacity: .27;
}

/* The list is scrolled a little past the first message */
.messages {
    position: relative;
    display: flex;
    flex-direction: column;
    gap: 9px;
    margin-top: -20px;
    padding-left: 19px;
}

.row {
    display: flex;
    align-items: flex-end;
    gap: 16px;
}

.bubble {
    position: relative;
    padding: 9px 14px 4px 16px;
    border-radius: 7px;
    background: #fff;
    box-shadow: 0 1px 1px rgba(60, 100, 50, .25);
}

.bubble-tailed {
    border-bottom-left-radius: 0;
}

.bubble-reply {
    width: 416px;
}

.bubble-wide {
    width: 537px;
}

.bubble-call {
    width: 322px;
    padding-bottom: 54px;
}

.bubble-photo {
    padding: 9px 0 0;
}

.bubble-photo .name {
    padding: 0 16px 6px;
}

.reply {
    margin: 7px 0 8px 1px;
}

.last-line {
    display: flex;
    justify-content: space-between;
    align-items: flex-end;
}

.last-line .text {
    padding-bottom: 6px;
}

.meta {
    display: flex;
    justify-content: flex-end;
    align-items: center;
    color: var(--meta);
    white-space: nowrap;
}

.eye {
    width: 20px;
    height: 14px;
    margin-right: 5px;
}

.views {
    margin-right: 9px;
}

.tail {
    position: absolute;
    left: -7px;
    bottom: 0;
    width: 8px;
    height: 14px;
}

.share {
    flex: none;
    display: flex;
    align-items: center;
    justify-content: center;
    width: 39px;
    height: 39px;
    margin-bottom: 6px;
    border-radius: 50%;
    color: #fff;
    background: rgba(85, 110, 60, .5);
}

.share svg {
    width: 18px;
    height: 15px;
}

/* Photo with the holding */
.photo {
    position: relative;
    padding: 7px 0;
    border-radius: 0 0 7px 7px;
    background: #000;
    overflow: hidden;
}

.holding {
    height: 111px;
    padding: 16px 30px 0 25px;
    font-family: "Noto Sans", sans-serif;
    color: #4a4a4a;
    background:
        linear-gradient(#c9c9c9, #c9c9c9) 25px 0 / 482px 1px no-repeat,
        linear-gradient(#d2d2d2, #d2d2d2) 25px 101px / 482px 2px no-repeat,
        #fff;
}

.holding-line {
    display: flex;
    align-items: baseline;
    height: 35px;
    line-height: 35px;
}

.symbol {
    font-size: 20px;
    font-weight: 600;
}

.tag {
    margin-left: 12px;
    padding: 0 12px;
    border-radius: 3px;
    font-size: 14px;
    line-height: 25px;
    background: #f3f4f7;
}

.label {
    font-size: 16px;
    color: #999;
}

.push {
    margin-left: auto;
}

.price {
    margin-left: 26px;
    font-size: 25px;
    font-weight: 600;
}

.qty {
    margin-left: 26px;
    font-size: 28px;
}

.profit {
    margin-left: 13px;
    font-size: 28px;
    color: #45bf95;
}

.meta-badge {
    position: absolute;
    right: 5px;
    bottom: 5px;
    height: 26px;
    padding: 0 10px;
    border-radius: 7px;
    color: #fff;
    background: rgba(0, 0, 0, .35);
}

.scroll-down {
    position: absolute;
    right: 18px;
    bottom: 18px;
    display: flex;
    align-items: center;
    justify-content: center;
    width: 53px;
    height: 53px;
    padding-top: 4px;
    border-radius: 50%;
    background: #fff;
    box-shadow: 0 1px 2px rgba(80, 100, 60, .4);
}

.scroll-down svg {
    fill: none;
    stroke: var(--muted);
    stroke-width: 2;
    stroke-linecap: round;
}

/* Bottom bar */
.bottombar {
    height: 37px;
}

.mute {
    width: 100%;
    height: 56px;
    font-weight: 600;
    color: var(--accent);
}
```
